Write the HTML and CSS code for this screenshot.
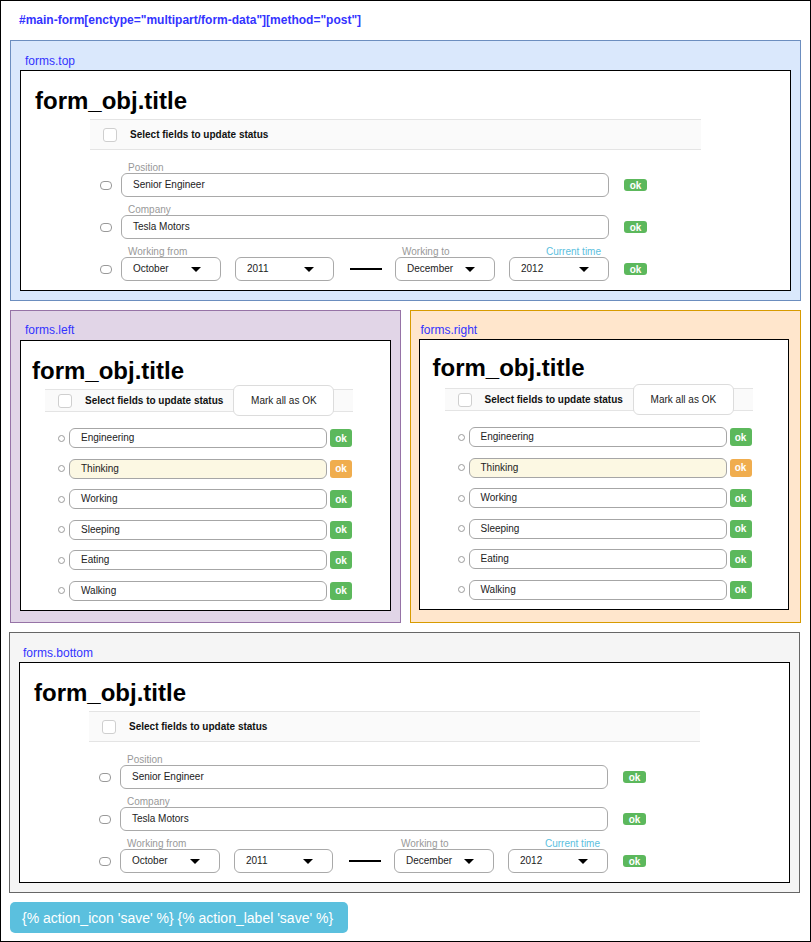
FILE: index.html
```html
<!DOCTYPE html>
<html lang="en">
<head>
<meta charset="utf-8">
<title>main-form</title>
<link rel="stylesheet" href="styles.css">
</head>
<body>
<div class="page">
  <div class="form-id">#main-form[enctype="multipart/form-data"][method="post"]</div>

  <section class="region region-top">
    <div class="region-label">forms.top</div>
    <div class="card card-wide">
      <h1 class="title">form_obj.title</h1>
      <div class="wide-body">
        <div class="bar bar-wide"><span class="chk"></span><span class="bar-text">Select fields to update status</span></div>
        <div class="frow first">
          <div class="cell"><span class="mini-chk"></span></div>
          <div class="field"><span class="lbl">Position</span><div class="input w-full">Senior Engineer</div></div>
          <div class="cell okcell"><span class="ok ok-sm">ok</span></div>
        </div>
        <div class="frow">
          <div class="cell"><span class="mini-chk"></span></div>
          <div class="field"><span class="lbl">Company</span><div class="input w-full">Tesla Motors</div></div>
          <div class="cell okcell"><span class="ok ok-sm">ok</span></div>
        </div>
        <div class="frow">
          <div class="cell"><span class="mini-chk"></span></div>
          <div class="field"><span class="lbl">Working from</span><div class="input select w100"><span>October</span><i class="caret"></i></div></div>
          <div class="field gap14"><div class="input select w99"><span>2011</span><i class="caret"></i></div></div>
          <div class="cell dash-cell"><span class="dash"></span></div>
          <div class="field"><span class="lbl">Working to</span><div class="input select w100"><span>December</span><i class="caret"></i></div></div>
          <div class="field gap14"><span class="lbl lbl-accent">Current time</span><div class="input select w100"><span>2012</span><i class="caret"></i></div></div>
          <div class="cell okcell"><span class="ok ok-sm">ok</span></div>
        </div>
      </div>
    </div>
  </section>

  <div class="split">
    <section class="region region-side region-left">
      <div class="region-label">forms.left</div>
      <div class="card card-side">
        <h1 class="title">form_obj.title</h1>
        <div class="side-body">
          <div class="bar bar-side"><span class="chk"></span><span class="bar-text">Select fields to update status</span><span class="mark-all">Mark all as OK</span></div>
          <div class="srow first"><span class="radio"></span><div class="sinput">Engineering</div><span class="ok ok-lg">ok</span></div>
          <div class="srow"><span class="radio"></span><div class="sinput warn">Thinking</div><span class="ok ok-lg ok-warn">ok</span></div>
          <div class="srow"><span class="radio"></span><div class="sinput">Working</div><span class="ok ok-lg">ok</span></div>
          <div class="srow"><span class="radio"></span><div class="sinput">Sleeping</div><span class="ok ok-lg">ok</span></div>
          <div class="srow"><span class="radio"></span><div class="sinput">Eating</div><span class="ok ok-lg">ok</span></div>
          <div class="srow"><span class="radio"></span><div class="sinput">Walking</div><span class="ok ok-lg">ok</span></div>
        </div>
      </div>
    </section>
    <section class="region region-side region-right">
      <div class="region-label">forms.right</div>
      <div class="card card-side">
        <h1 class="title">form_obj.title</h1>
        <div class="side-body">
          <div class="bar bar-side"><span class="chk"></span><span class="bar-text">Select fields to update status</span><span class="mark-all">Mark all as OK</span></div>
          <div class="srow first"><span class="radio"></span><div class="sinput">Engineering</div><span class="ok ok-lg">ok</span></div>
          <div class="srow"><span class="radio"></span><div class="sinput warn">Thinking</div><span class="ok ok-lg ok-warn">ok</span></div>
          <div class="srow"><span class="radio"></span><div class="sinput">Working</div><span class="ok ok-lg">ok</span></div>
          <div class="srow"><span class="radio"></span><div class="sinput">Sleeping</div><span class="ok ok-lg">ok</span></div>
          <div class="srow"><span class="radio"></span><div class="sinput">Eating</div><span class="ok ok-lg">ok</span></div>
          <div class="srow"><span class="radio"></span><div class="sinput">Walking</div><span class="ok ok-lg">ok</span></div>
        </div>
      </div>
    </section>
  </div>

  <section class="region region-bottom">
    <div class="region-label">forms.bottom</div>
    <div class="card card-wide">
      <h1 class="title">form_obj.title</h1>
      <div class="wide-body">
        <div class="bar bar-wide"><span class="chk"></span><span class="bar-text">Select fields to update status</span></div>
        <div class="frow first">
          <div class="cell"><span class="mini-chk"></span></div>
          <div class="field"><span class="lbl">Position</span><div class="input w-full">Senior Engineer</div></div>
          <div class="cell okcell"><span class="ok ok-sm">ok</span></div>
        </div>
        <div class="frow">
          <div class="cell"><span class="mini-chk"></span></div>
          <div class="field"><span class="lbl">Company</span><div class="input w-full">Tesla Motors</div></div>
          <div class="cell okcell"><span class="ok ok-sm">ok</span></div>
        </div>
        <div class="frow">
          <div class="cell"><span class="mini-chk"></span></div>
          <div class="field"><span class="lbl">Working from</span><div class="input select w100"><span>October</span><i class="caret"></i></div></div>
          <div class="field gap14"><div class="input select w99"><span>2011</span><i class="caret"></i></div></div>
          <div class="cell dash-cell"><span class="dash"></span></div>
          <div class="field"><span class="lbl">Working to</span><div class="input select w100"><span>December</span><i class="caret"></i></div></div>
          <div class="field gap14"><span class="lbl lbl-accent">Current time</span><div class="input select w100"><span>2012</span><i class="caret"></i></div></div>
          <div class="cell okcell"><span class="ok ok-sm">ok</span></div>
        </div>
      </div>
    </div>
  </section>

  <button class="save" type="submit">{% action_icon 'save' %} {% action_label 'save' %}</button>
</div>
</body>
</html>
```

FILE: styles.css
```css
* { box-sizing: border-box; }

body {
  margin: 0;
  font-family: "Liberation Sans", Arial, sans-serif;
  color: #000;
}

.page {
  width: 811px;
  height: 942px;
  border: 1px solid #000;
  padding: 0 9px;
}

.form-id {
  height: 39px;
  padding: 12px 0 0 9px;
  font-size: 12px;
  line-height: 14px;
  font-weight: bold;
  color: #3333ff;
  white-space: nowrap;
}

/* regions */
.region {
  border: 1px solid;
  padding: 13px 9px 9px 9px;
}

.region-label {
  font-size: 12px;
  line-height: 14px;
  color: #3333ff;
  margin: 0 0 2px 5px;
  white-space: nowrap;
}

.region-top {
  height: 261px;
  background: #dae8fc;
  border-color: #6c8ebf;
}

.region-bottom {
  height: 261px;
  margin: 9px 1px 0 -1px;
  background: #f5f5f5;
  border-color: #666666;
}
.region-bottom .region-label { margin-left: 4px; }

.split {
  display: flex;
  gap: 9px;
  margin-top: 9px;
}

.region-side {
  flex: 1 1 0;
  height: 313px;
}

.region-left {
  background: #e1d5e7;
  border-color: #9673a6;
  padding: 12px 9px 0 9px;
}
.region-left .region-label { margin: 0 0 3px 5px; }

.region-right {
  background: #ffe6cc;
  border-color: #d79b00;
  padding: 12px 11px 0 8px;
}
.region-right .region-label { margin: 0 0 2px 2px; }

/* cards */
.card {
  background: #fff;
  border: 1px solid #000;
}

.card-wide {
  height: 221px;
  padding: 16px 0 0 14px;
}

.card-side {
  height: 271px;
  padding: 16px 0 0 11px;
}
.region-right .card-side { padding: 14px 0 0 13px; }

.title {
  margin: 0;
  height: 28px;
  font-size: 24px;
  line-height: 28px;
  font-weight: bold;
  white-space: nowrap;
}

.wide-body {
  margin: 4px 0 0 55px;
  width: 611px;
}

.side-body {
  margin: 4px 0 0 13px;
  width: 308px;
}
.region-right .side-body { margin: 6px 0 0 12px; }

/* header bar */
.bar {
  display: flex;
  align-items: center;
  background: #fafafa;
  border-top: 1px solid #e4e4e4;
  border-bottom: 1px solid #e4e4e4;
  padding-left: 13px;
}
.bar-wide { height: 31px; }
.bar-side { height: 23px; }

.chk {
  flex: none;
  width: 14px;
  height: 14px;
  background: #fff;
  border: 1px solid #cfcfcf;
  border-radius: 3px;
}

.bar-text {
  margin-left: 13px;
  font-size: 10px;
  font-weight: bold;
  color: #111;
  white-space: nowrap;
}

.mark-all {
  flex: none;
  display: flex;
  align-items: center;
  justify-content: center;
  margin-left: 10px;
  width: 101px;
  height: 31px;
  background: #fff;
  border: 1px solid #dcdcdc;
  border-radius: 6px;
  font-size: 10px;
  color: #222;
  white-space: nowrap;
}

/* wide form rows */
.frow {
  display: flex;
  align-items: flex-end;
  margin: 7px 0 0 10px;
}
.frow.first { margin-top: 12px; }

.cell {
  flex: none;
  height: 24px;
  display: flex;
  align-items: center;
}

.mini-chk {
  width: 12px;
  height: 9px;
  margin-right: 9px;
  border: 1px solid #999;
  border-radius: 4px;
  background: #fff;
}

.field {
  flex: none;
  display: flex;
  flex-direction: column;
}
.gap14 { margin-left: 14px; }

.lbl {
  height: 11px;
  padding-left: 7px;
  font-size: 10px;
  line-height: 11px;
  color: #999;
  white-space: nowrap;
}
.lbl-accent {
  color: #5bc0de;
  text-align: right;
  padding: 0 8px 0 0;
}

.input {
  height: 24px;
  padding: 0 11px;
  border: 1px solid #a9a9a9;
  border-radius: 6px;
  font-size: 10px;
  line-height: 22px;
  color: #222;
  white-space: nowrap;
}
.w-full { width: 488px; }
.w100 { width: 100px; }
.w99 { width: 99px; }

.select {
  display: flex;
  align-items: center;
  justify-content: space-between;
  padding: 0 19px 0 11px;
}

.caret {
  width: 0;
  height: 0;
  border-left: 5px solid transparent;
  border-right: 5px solid transparent;
  border-top: 5px solid #000;
}

.dash-cell { margin: 0 13px 0 16px; }
.dash {
  width: 32px;
  height: 2px;
  background: #000;
}

.okcell { margin-left: 15px; }

.ok {
  flex: none;
  display: inline-flex;
  align-items: center;
  justify-content: center;
  background: #5cb85c;
  color: #fff;
  font-size: 10px;
  font-weight: bold;
  border-radius: 3px;
}
.ok-sm { width: 23px; height: 12px; }
.ok-lg { width: 22px; height: 18px; margin-left: 3px; }
.ok-warn { background: #f0ad4e; }

/* side rows */
.srow {
  display: flex;
  align-items: center;
  height: 20px;
  margin-top: 10.6px;
  padding-left: 13px;
}
.srow.first { margin-top: 16px; }

.radio {
  flex: none;
  width: 7px;
  height: 7px;
  margin-right: 4px;
  border: 1px solid #9a9a9a;
  border-radius: 50%;
  background: #fff;
}

.sinput {
  flex: none;
  width: 258px;
  height: 20px;
  padding: 0 11px;
  border: 1px solid #a6a6a6;
  border-radius: 6px;
  font-size: 10px;
  line-height: 18px;
  color: #222;
  white-space: nowrap;
}
.sinput.warn { background: #fcf8e3; }

/* save button */
.save {
  display: block;
  margin-top: 9px;
  width: 338px;
  height: 31px;
  padding: 0 0 0 12px;
  border: 0;
  border-radius: 5px;
  background: #5bc0de;
  color: #fff;
  font-family: "Liberation Sans", Arial, sans-serif;
  font-size: 14px;
  text-align: left;
  white-space: nowrap;
}
```
